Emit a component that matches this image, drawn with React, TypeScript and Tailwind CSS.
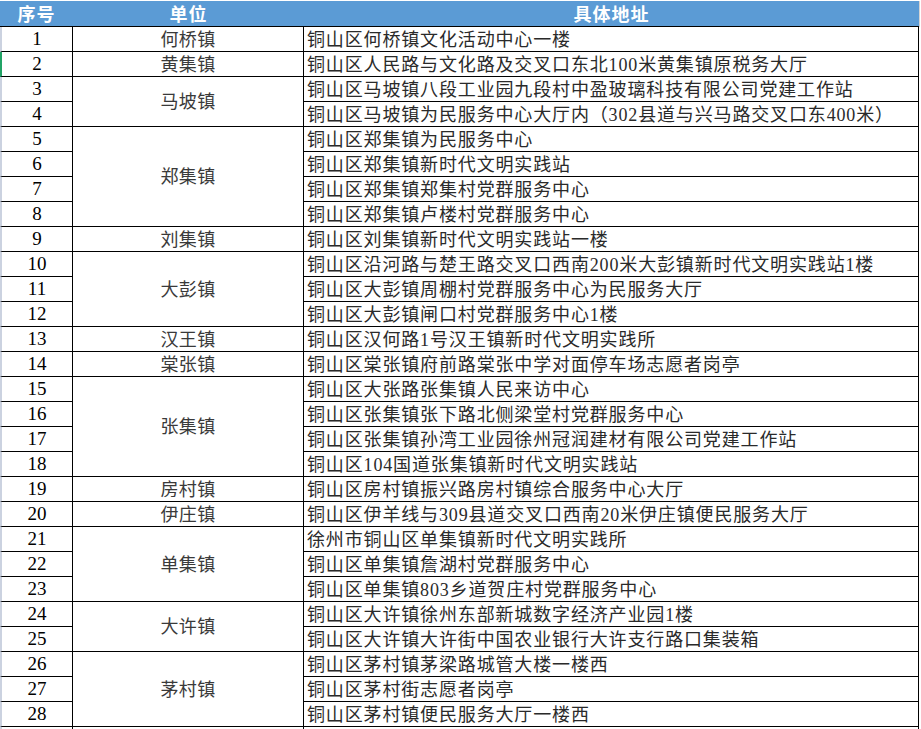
import React from "react";

type Group = { unit: string; rows: [number, string][] };

const groups: Group[] = [
  { unit: "何桥镇", rows: [[1, "铜山区何桥镇文化活动中心一楼"]] },
  { unit: "黄集镇", rows: [[2, "铜山区人民路与文化路及交叉口东北100米黄集镇原税务大厅"]] },
  {
    unit: "马坡镇",
    rows: [
      [3, "铜山区马坡镇八段工业园九段村中盈玻璃科技有限公司党建工作站"],
      [4, "铜山区马坡镇为民服务中心大厅内（302县道与兴马路交叉口东400米）"],
    ],
  },
  {
    unit: "郑集镇",
    rows: [
      [5, "铜山区郑集镇为民服务中心"],
      [6, "铜山区郑集镇新时代文明实践站"],
      [7, "铜山区郑集镇郑集村党群服务中心"],
      [8, "铜山区郑集镇卢楼村党群服务中心"],
    ],
  },
  { unit: "刘集镇", rows: [[9, "铜山区刘集镇新时代文明实践站一楼"]] },
  {
    unit: "大彭镇",
    rows: [
      [10, "铜山区沿河路与楚王路交叉口西南200米大彭镇新时代文明实践站1楼"],
      [11, "铜山区大彭镇周棚村党群服务中心为民服务大厅"],
      [12, "铜山区大彭镇闸口村党群服务中心1楼"],
    ],
  },
  { unit: "汉王镇", rows: [[13, "铜山区汉何路1号汉王镇新时代文明实践所"]] },
  { unit: "棠张镇", rows: [[14, "铜山区棠张镇府前路棠张中学对面停车场志愿者岗亭"]] },
  {
    unit: "张集镇",
    rows: [
      [15, "铜山区大张路张集镇人民来访中心"],
      [16, "铜山区张集镇张下路北侧梁堂村党群服务中心"],
      [17, "铜山区张集镇孙湾工业园徐州冠润建材有限公司党建工作站"],
      [18, "铜山区104国道张集镇新时代文明实践站"],
    ],
  },
  { unit: "房村镇", rows: [[19, "铜山区房村镇振兴路房村镇综合服务中心大厅"]] },
  { unit: "伊庄镇", rows: [[20, "铜山区伊羊线与309县道交叉口西南20米伊庄镇便民服务大厅"]] },
  {
    unit: "单集镇",
    rows: [
      [21, "徐州市铜山区单集镇新时代文明实践所"],
      [22, "铜山区单集镇詹湖村党群服务中心"],
      [23, "铜山区单集镇803乡道贺庄村党群服务中心"],
    ],
  },
  {
    unit: "大许镇",
    rows: [
      [24, "铜山区大许镇徐州东部新城数字经济产业园1楼"],
      [25, "铜山区大许镇大许街中国农业银行大许支行路口集装箱"],
    ],
  },
  {
    unit: "茅村镇",
    rows: [
      [26, "铜山区茅村镇茅梁路城管大楼一楼西"],
      [27, "铜山区茅村街志愿者岗亭"],
      [28, "铜山区茅村镇便民服务大厅一楼西"],
    ],
  },
];

const spanClass: Record<number, string> = {
  1: "row-span-1",
  2: "row-span-2",
  3: "row-span-3",
  4: "row-span-4",
};

export default function App() {
  const cells: React.ReactNode[] = [];
  groups.forEach((g) => {
    g.rows.forEach(([n, addr], i) => {
      cells.push(
        <div
          key={`n${n}`}
          className={`col-start-1 h-[25px] flex items-center justify-center border-b border-r border-black border-l-2 ${
            n === 2 ? "border-l-[#21a366]" : "border-l-[#cbd2e0]"
          } text-[19px] text-black pt-[1px]`}
          style={{ fontFamily: "'Liberation Serif', serif" }}
        >
          {n}
        </div>
      );
      if (i === 0) {
        cells.push(
          <div
            key={`u${n}`}
            className={`col-start-2 ${spanClass[g.rows.length]} flex items-center justify-center border-b border-r border-black text-[18px] text-[#3a3a3a] tracking-[0.3px] pt-[2px]`}
          >
            {g.unit}
          </div>
        );
      }
      cells.push(
        <div
          key={`a${n}`}
          className="col-start-3 h-[25px] flex items-center border-b border-r border-black pl-[3px] text-[18px] text-[#2a2a2a] tracking-[0.85px] whitespace-nowrap overflow-hidden pt-[2px]"
        >
          {addr}
        </div>
      );
    });
  });
  cells.push(
    <div key="e1" className="col-start-1 h-[25px] border-r border-black border-l-2 border-l-[#cbd2e0]" />,
    <div key="e2" className="col-start-2 h-[25px] border-r border-black" />,
    <div key="e3" className="col-start-3 h-[25px] border-r border-black" />
  );

  return (
    <div
      className="w-[921px] h-[729px] overflow-hidden bg-white"
      style={{ fontFamily: "'Liberation Serif', 'Noto Sans CJK SC', serif" }}
    >
      <div className="flex mt-[1px]">
        <div className="grid grid-cols-[73px_231px_615px] h-[26px] bg-[#5b9bd5] border-b border-black text-white font-bold text-[18px] tracking-[1px]">
          <div className="flex items-center justify-center pt-[1px]">序号</div>
          <div className="flex items-center justify-center pt-[1px]">单位</div>
          <div className="flex items-center justify-center pt-[1px]">具体地址</div>
        </div>
        <div className="w-[1px] h-[26px] bg-[#d4d4d4]" />
      </div>
      <div className="grid grid-cols-[73px_231px_615px] auto-rows-[25px] w-[919px]">
        {cells}
      </div>
    </div>
  );
}
